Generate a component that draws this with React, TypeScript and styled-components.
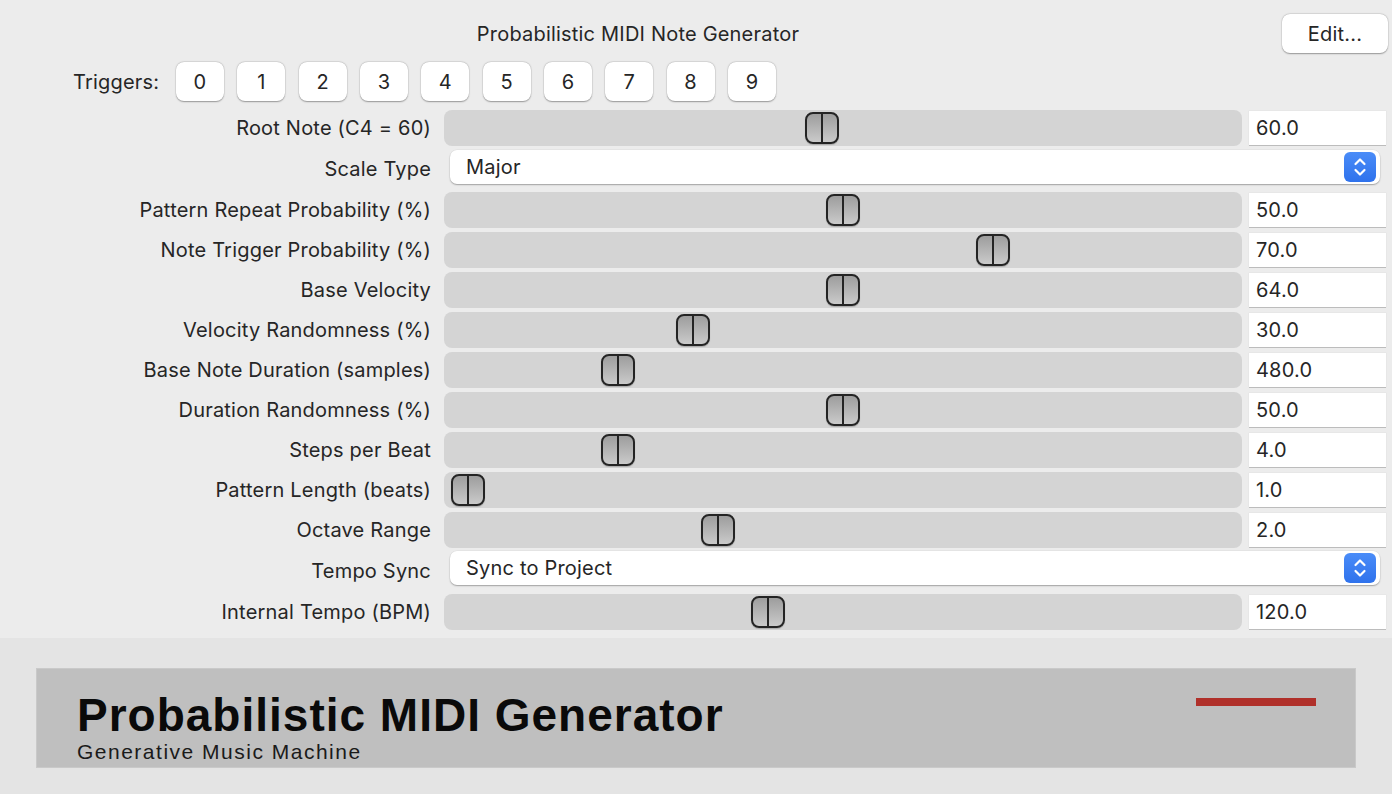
import React from "react";
import styled, { createGlobalStyle } from "styled-components";

const GlobalStyle = createGlobalStyle`
  html, body {
    margin: 0;
    padding: 0;
    background: #ececec;
  }
  * {
    box-sizing: border-box;
  }
`;

const Page = styled.div`
  width: 1392px;
  height: 794px;
  background: #ececec;
  display: flex;
  flex-direction: column;
  overflow: hidden;
  font-family: Inter, "Noto Sans", "Liberation Sans", sans-serif;
  font-size: 20px;
  letter-spacing: 0.2px;
  color: #262626;
`;

const Controls = styled.div`
  display: flex;
  flex-direction: column;
  padding-bottom: 6px;
`;

const Header = styled.div`
  display: flex;
  align-items: center;
  padding: 14px 4px 0 0;
`;

const Title = styled.div`
  flex: 1;
  text-align: center;
  padding-right: 6px;
`;

const PushButton = styled.button<{ $w: number }>`
  width: ${(p) => p.$w}px;
  height: 39px;
  border: none;
  border-radius: 8px;
  background: #ffffff;
  box-shadow: 0 0.5px 1.5px rgba(0, 0, 0, 0.35), 0 0 0 0.5px rgba(0, 0, 0, 0.06);
  font-family: inherit;
  font-size: inherit;
  letter-spacing: inherit;
  color: #262626;
  padding: 0;
`;

const TriggerRow = styled.div`
  display: flex;
  align-items: center;
  padding: 9px 0 0 73px;
  margin-bottom: 7px;
`;

const TriggerLabel = styled.span`
  width: 103px;
`;

const TriggerButtons = styled.div`
  display: flex;
  gap: 13.33px;
`;

const ParamRow = styled.div<{ $h: number }>`
  display: grid;
  grid-template-columns: 431px 798px 137px;
  column-gap: 13px;
  align-items: center;
  height: ${(p) => p.$h}px;
`;

const Label = styled.div`
  text-align: right;
  white-space: nowrap;
`;

const Track = styled.div`
  position: relative;
  height: 36px;
  border-radius: 8px;
  background: #d4d4d4;
`;

const Thumb = styled.div`
  position: absolute;
  top: 2px;
  width: 34px;
  height: 32px;
  border: 2px solid #242424;
  border-radius: 8px;
  background: linear-gradient(#9d9d9d, #cacaca);
  box-shadow: 0 1px 1px rgba(0, 0, 0, 0.2);
  &::after {
    content: "";
    position: absolute;
    left: 14px;
    top: 0;
    bottom: 0;
    width: 2px;
    background: #242424;
  }
`;

const ValueBox = styled.div`
  width: 137px;
  height: 34px;
  margin-left: -6px;
  background: #ffffff;
  box-shadow: 0 1px 0 #bcbcbc, 0 0 0 0.5px #e2e2e2;
  display: flex;
  align-items: center;
  padding-left: 7px;
`;

const Select = styled.div<{ $top: number }>`
  grid-column: 2 / 4;
  align-self: start;
  margin: ${(p) => p.$top}px 12px 0 6px;
  height: 34px;
  border-radius: 7px;
  background: #ffffff;
  box-shadow: 0 1px 1.5px rgba(0, 0, 0, 0.3), 0 0 0 0.5px rgba(0, 0, 0, 0.05);
  display: flex;
  align-items: center;
  justify-content: space-between;
  padding: 0 4px 0 16px;
`;

const Stepper = styled.div`
  width: 32px;
  height: 30px;
  border-radius: 6px;
  background: linear-gradient(#4a8cf8, #2f72ec);
  display: flex;
  align-items: center;
  justify-content: center;
`;

const Footer = styled.div`
  flex: 1;
  background: #e4e4e4;
  padding: 30px 36px 0 36px;
`;

const Banner = styled.div`
  width: 1320px;
  height: 100px;
  background: #bfbfbf;
  border: 1px solid #c9c9c9;
  display: flex;
  justify-content: space-between;
  padding: 21px 39px 0 40px;
`;

const BannerText = styled.div`
  display: flex;
  flex-direction: column;
  font-family: "Liberation Sans", Arial, sans-serif;
  color: #0a0a0a;
`;

const BannerTitle = styled.div`
  font-size: 46px;
  font-weight: bold;
  line-height: 50px;
  letter-spacing: 1px;
`;

const BannerSub = styled.div`
  font-size: 21px;
  line-height: 24px;
  letter-spacing: 1.5px;
  color: #1a1a1a;
`;

const RedBar = styled.div`
  width: 120px;
  height: 8px;
  margin-top: 8px;
  background: #b0302a;
`;

type Param =
  | { kind: "slider"; label: string; value: string; frac: number }
  | { kind: "select"; label: string; value: string; top: number };

const params: Param[] = [
  { kind: "slider", label: "Root Note (C4 = 60)", value: "60.0", frac: 60 / 127 },
  { kind: "select", label: "Scale Type", value: "Major", top: 2 },
  { kind: "slider", label: "Pattern Repeat Probability (%)", value: "50.0", frac: 0.5 },
  { kind: "slider", label: "Note Trigger Probability (%)", value: "70.0", frac: 0.7 },
  { kind: "slider", label: "Base Velocity", value: "64.0", frac: 63 / 126 },
  { kind: "slider", label: "Velocity Randomness (%)", value: "30.0", frac: 0.3 },
  { kind: "slider", label: "Base Note Duration (samples)", value: "480.0", frac: 0.2 },
  { kind: "slider", label: "Duration Randomness (%)", value: "50.0", frac: 0.5 },
  { kind: "slider", label: "Steps per Beat", value: "4.0", frac: 3 / 15 },
  { kind: "slider", label: "Pattern Length (beats)", value: "1.0", frac: 0 },
  { kind: "slider", label: "Octave Range", value: "2.0", frac: 1 / 3 },
  { kind: "select", label: "Tempo Sync", value: "Sync to Project", top: 1 },
  { kind: "slider", label: "Internal Tempo (BPM)", value: "120.0", frac: 0.4 },
];

function StepperIcon() {
  return (
    <svg width="14" height="20" viewBox="0 0 14 20" fill="none">
      <path d="M2.5 7 L7 2.5 L11.5 7" stroke="#fff" strokeWidth="2.2" strokeLinecap="round" strokeLinejoin="round" />
      <path d="M2.5 13 L7 17.5 L11.5 13" stroke="#fff" strokeWidth="2.2" strokeLinecap="round" strokeLinejoin="round" />
    </svg>
  );
}

function ParamControl({ p }: { p: Param }) {
  if (p.kind === "select") {
    return (
      <ParamRow $h={42}>
        <Label>{p.label}</Label>
        <Select $top={p.top}>
          <span>{p.value}</span>
          <Stepper>
            <StepperIcon />
          </Stepper>
        </Select>
      </ParamRow>
    );
  }
  // thumb travels from 7px to track width - 41px
  const left = 7 + p.frac * (798 - 34 - 14);
  return (
    <ParamRow $h={40}>
      <Label>{p.label}</Label>
      <Track>
        <Thumb style={{ left }} />
      </Track>
      <ValueBox>{p.value}</ValueBox>
    </ParamRow>
  );
}

export default function App() {
  return (
    <>
      <GlobalStyle />
      <Page>
        <Controls>
          <Header>
            <Title>Probabilistic MIDI Note Generator</Title>
            <PushButton $w={106}>Edit...</PushButton>
          </Header>
          <TriggerRow>
            <TriggerLabel>Triggers:</TriggerLabel>
            <TriggerButtons>
              {Array.from({ length: 10 }, (_, i) => (
                <PushButton key={i} $w={48}>
                  {i}
                </PushButton>
              ))}
            </TriggerButtons>
          </TriggerRow>
          {params.map((p) => (
            <ParamControl key={p.label} p={p} />
          ))}
        </Controls>
        <Footer>
          <Banner>
            <BannerText>
              <BannerTitle>Probabilistic MIDI Generator</BannerTitle>
              <BannerSub>Generative Music Machine</BannerSub>
            </BannerText>
            <RedBar />
          </Banner>
        </Footer>
      </Page>
    </>
  );
}
